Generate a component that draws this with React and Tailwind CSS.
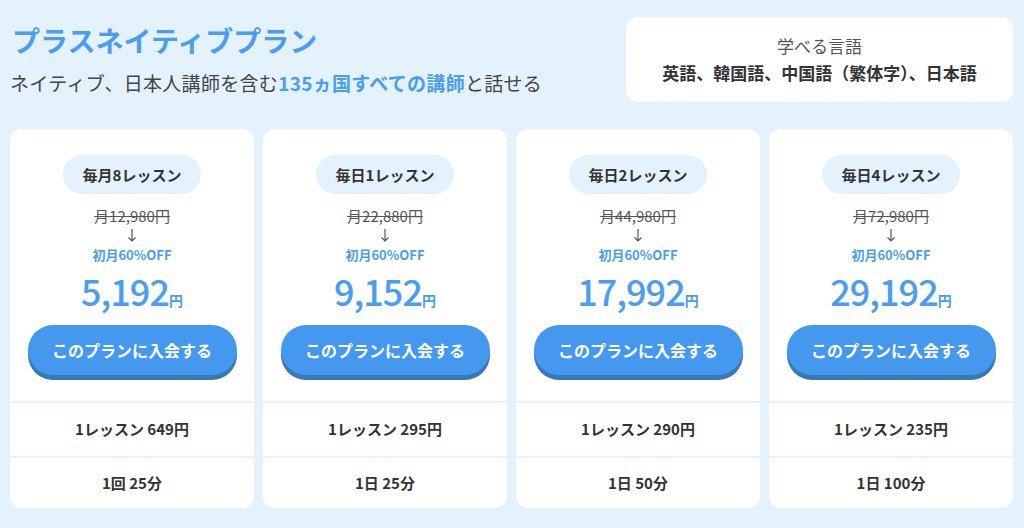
import React from "react";

const plans = [
  { name: "毎月8レッスン", orig: "月12,980円", price: "5,192", per: "1レッスン 649円", time: "1回 25分" },
  { name: "毎日1レッスン", orig: "月22,880円", price: "9,152", per: "1レッスン 295円", time: "1日 25分" },
  { name: "毎日2レッスン", orig: "月44,980円", price: "17,992", per: "1レッスン 290円", time: "1日 50分" },
  { name: "毎日4レッスン", orig: "月72,980円", price: "29,192", per: "1レッスン 235円", time: "1日 100分" },
];

function Arrow() {
  return (
    <svg width="10" height="18" viewBox="0 0 10 18" className="block">
      <path d="M5 3 V15 M1.5 11.5 L5 15 L8.5 11.5" stroke="#555" strokeWidth="1.2" fill="none" />
    </svg>
  );
}

function Card({ p }) {
  return (
    <div className="flex flex-col bg-white rounded-[12px] overflow-hidden">
      <div className="flex flex-col items-center pt-[26px] pb-[26px]">
        <div className="h-[39px] px-[20px] rounded-full bg-[#e3f2fd] flex items-center justify-center text-[15px] font-bold text-[#333] leading-none">
          {p.name}
        </div>
        <div className="mt-[12px] h-[20px] leading-[20px] text-[15px] text-[#555] line-through">{p.orig}</div>
        <div className="h-[18px] flex items-center justify-center"><Arrow /></div>
        <div className="h-[20px] leading-[20px] text-[13px] font-semibold text-[#4a9df0] mt-[1px]">初月60%OFF</div>
        <div className="flex items-baseline text-[#4a9df0] font-medium h-[44px] leading-[44px] mt-[3px]">
          <span className="text-[36px] tracking-[-1px]">{p.price}</span>
          <span className="text-[14px] font-semibold">円</span>
        </div>
        <button className="mt-[13px] w-[209px] h-[50px] rounded-full bg-[#4499ee] text-white text-[16px] font-bold shadow-[0_5px_0_#3a78b3]">
          このプランに入会する
        </button>
      </div>
      <div className="border-t-2 border-[#e6f3fd] h-[55px] flex items-center justify-center text-[15px] font-semibold text-[#333]">
        {p.per}
      </div>
      <div className="border-t-2 border-[#e6f3fd] flex-1 flex items-center justify-center text-[15px] font-semibold text-[#333]">
        {p.time}
      </div>
    </div>
  );
}

export default function App() {
  return (
    <div
      className="w-[1024px] h-[528px] bg-[#e3f2fd] pl-[10px] pr-[11px] overflow-hidden"
      style={{ fontFamily: '"Noto Sans CJK JP", "Noto Sans", sans-serif' }}
    >
      <div className="flex justify-between items-start pt-[17px] h-[129px]">
        <div className="flex flex-col pl-[2px]">
          <div className="text-[28px] font-bold text-[#4a9df0] leading-[40px] mt-[3px]">プラスネイティブプラン</div>
          <div className="text-[19px] text-[#444] leading-[26px] mt-[10px] tracking-[0.3px] -ml-[2px]">
            ネイティブ、日本人講師を含む<span className="text-[#4a9df0] font-semibold">135ヵ国すべての講師</span>と話せる
          </div>
        </div>
        <div className="w-[387px] h-[85px] bg-white rounded-[12px] flex flex-col items-center justify-center">
          <div className="text-[17px] text-[#555] leading-[24px]">学べる言語</div>
          <div className="text-[17px] font-bold text-[#333] leading-[26px] mt-[2px]">英語、韓国語、中国語（繁体字）、日本語</div>
        </div>
      </div>
      <div className="grid grid-cols-4 gap-[9px] h-[379px]">
        {plans.map((p) => (
          <Card key={p.name} p={p} />
        ))}
      </div>
    </div>
  );
}
